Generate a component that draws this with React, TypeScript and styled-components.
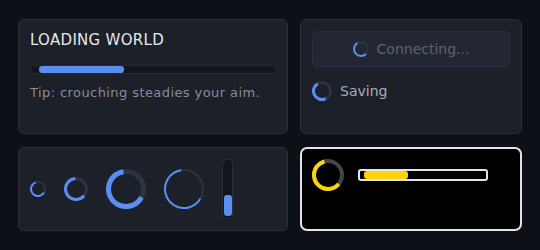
import React from "react";
import styled, { createGlobalStyle } from "styled-components";

const Global = createGlobalStyle`
  html, body { margin: 0; padding: 0; background: #0d1016; }
  body { font-family: "DejaVu Sans", Verdana, sans-serif; }
  * { box-sizing: border-box; }
`;

const Page = styled.div`
  width: 540px;
  height: 250px;
  padding: 19px 18px;
  display: grid;
  grid-template-columns: 270px 222px;
  grid-template-rows: 115px 84px;
  column-gap: 12px;
  row-gap: 13px;
`;

const Panel = styled.div`
  background: #1c2029;
  border: 1px solid #2a303b;
  border-radius: 6px;
  padding: 11px;
`;

const LoadingPanel = styled(Panel)`
  display: flex;
  flex-direction: column;
`;

const Title = styled.div`
  font-size: 15px;
  letter-spacing: 0.3px;
  color: #e4e7ed;
  line-height: 18px;
  margin-bottom: 16px;
`;

const Track = styled.div`
  height: 9px;
  background: #12151b;
  border: 1px solid #232833;
  border-radius: 4px;
  padding: 0;
  display: flex;
  align-items: stretch;
`;

const Fill = styled.div<{ $offset: number; $width: number }>`
  margin-left: ${(p) => p.$offset}px;
  width: ${(p) => p.$width}px;
  background: #5a8ef0;
  border-radius: 3px;
`;

const Tip = styled.div`
  margin-top: 11px;
  font-size: 13px;
  color: #878d99;
  letter-spacing: 0.42px;
`;

const StatusPanel = styled(Panel)`
  display: flex;
  flex-direction: column;
  gap: 14px;
`;

const Button = styled.div`
  height: 36px;
  background: #222733;
  border: 1px solid #2a303b;
  border-radius: 6px;
  display: flex;
  align-items: center;
  justify-content: center;
  gap: 8px;
  font-size: 14px;
  color: #5c6370;
`;

const Row = styled.div`
  display: flex;
  align-items: center;
  gap: 8px;
  font-size: 14px;
  line-height: 18px;
  color: #a7adb8;
`;

const SpinnerPanel = styled(Panel)`
  display: flex;
  align-items: center;
  gap: 18px;
`;

const VBar = styled.div`
  width: 11px;
  height: 60px;
  background: #12151b;
  border: 1px solid #2a303b;
  border-radius: 4px;
  padding: 1px 0 2px;
  display: flex;
  flex-direction: column;
  justify-content: flex-end;
  align-items: center;
`;

const VFill = styled.div`
  width: 8px;
  height: 21px;
  background: #5a8ef0;
  border-radius: 3px;
`;

const ContrastPanel = styled.div`
  background: #000;
  border: 2px solid #e4e4e4;
  border-radius: 7px;
  padding: 10px;
  display: flex;
  align-items: flex-start;
`;

const ContrastRow = styled.div`
  display: flex;
  align-items: center;
  gap: 14px;
`;

const HCTrack = styled.div`
  width: 130px;
  height: 12px;
  border: 2px solid #e4e4e4;
  border-radius: 3px;
  background: #000;
  display: flex;
  padding: 0 0 0 4px;
`;

const HCFill = styled.div`
  width: 44px;
  background: #ffd400;
  border-radius: 3px;
`;

const SpinSvg = styled.svg`
  display: block;
  flex: none;
`;

type SpinnerProps = {
  size: number;
  stroke: number;
  start: number;
  end: number;
  color?: string;
  track?: string;
};

function Spinner({ size, stroke, start, end, color = "#5a8ef0", track = "#2c3341" }: SpinnerProps) {
  const r = (size - stroke) / 2;
  const c = 2 * Math.PI * r;
  const len = ((end - start) / 360) * c;
  const mid = size / 2;
  return (
    <SpinSvg width={size} height={size} viewBox={`0 0 ${size} ${size}`}>
      <circle cx={mid} cy={mid} r={r} fill="none" stroke={track} strokeWidth={stroke} />
      <circle
        cx={mid}
        cy={mid}
        r={r}
        fill="none"
        stroke={color}
        strokeWidth={stroke}
        strokeDasharray={`${len} ${c}`}
        transform={`rotate(${start} ${mid} ${mid})`}
      />
    </SpinSvg>
  );
}

export default function App() {
  return (
    <>
      <Global />
      <Page>
        <LoadingPanel>
          <Title>LOADING WORLD</Title>
          <Track>
            <Fill $offset={8} $width={85} />
          </Track>
          <Tip>Tip: crouching steadies your aim.</Tip>
        </LoadingPanel>
        <StatusPanel>
          <Button>
            <Spinner size={16} stroke={2} start={46} end={238} />
            <span>Connecting...</span>
          </Button>
          <Row>
            <Spinner size={20} stroke={3} start={65} end={238} />
            <span>Saving</span>
          </Row>
        </StatusPanel>
        <SpinnerPanel>
          <Spinner size={16} stroke={2} start={30} end={250} />
          <Spinner size={24} stroke={3} start={40} end={265} />
          <Spinner size={40} stroke={5} start={28} end={260} />
          <Spinner size={40} stroke={2} start={31} end={260} />
          <VBar>
            <VFill />
          </VBar>
        </SpinnerPanel>
        <ContrastPanel>
          <ContrastRow>
            <Spinner size={32} stroke={4} start={40} end={254} color="#ffd400" track="#444444" />
            <HCTrack>
              <HCFill />
            </HCTrack>
          </ContrastRow>
        </ContrastPanel>
      </Page>
    </>
  );
}
